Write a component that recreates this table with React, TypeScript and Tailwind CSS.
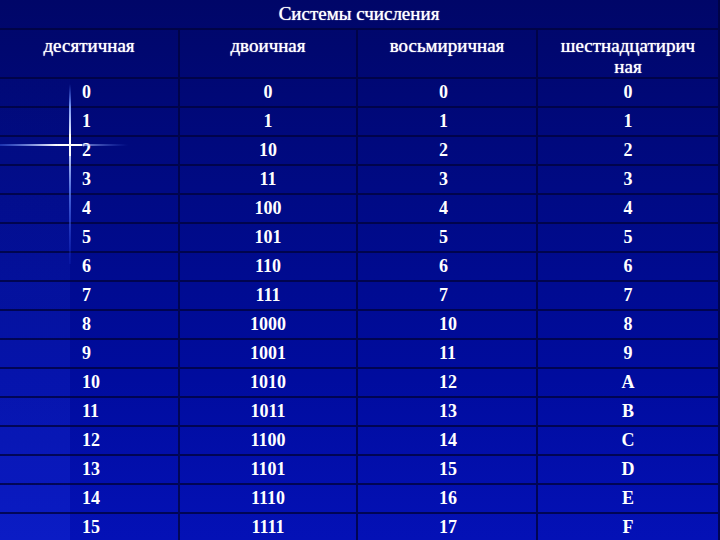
import { Fragment } from 'react';

const rows: [string, string, string, string][] = [
    ['0', '0', '0', '0'],
    ['1', '1', '1', '1'],
    ['2', '10', '2', '2'],
    ['3', '11', '3', '3'],
    ['4', '100', '4', '4'],
    ['5', '101', '5', '5'],
    ['6', '110', '6', '6'],
    ['7', '111', '7', '7'],
    ['8', '1000', '10', '8'],
    ['9', '1001', '11', '9'],
    ['10', '1010', '12', 'A'],
    ['11', '1011', '13', 'B'],
    ['12', '1100', '14', 'C'],
    ['13', '1101', '15', 'D'],
    ['14', '1110', '16', 'E'],
    ['15', '1111', '17', 'F'],
];

const cell = 'border-b-2 border-r-2 border-[#00033e]/80 flex items-center';
const head = `${cell} justify-center items-start pt-[5px] text-[19px] leading-[21px] text-center [text-shadow:0_0_1px_#ffffff]`;

// Blue glint on the left edge of the slide
const Sparkle = () => (
    <svg className="absolute left-0 top-0 pointer-events-none" width="160" height="540" viewBox="0 0 160 540">
        <defs>
            <linearGradient id="hz" x1="0" x2="1" y1="0" y2="0">
                <stop offset="0" stopColor="#4f7bff" stopOpacity="0.35" />
                <stop offset="0.44" stopColor="#ffffff" stopOpacity="1" />
                <stop offset="1" stopColor="#4f7bff" stopOpacity="0" />
            </linearGradient>
            <linearGradient id="vt" x1="0" x2="0" y1="0" y2="1">
                <stop offset="0" stopColor="#4f7bff" stopOpacity="0" />
                <stop offset="0.12" stopColor="#7fa0ff" stopOpacity="0.9" />
                <stop offset="0.3" stopColor="#ffffff" stopOpacity="1" />
                <stop offset="0.6" stopColor="#6a90ff" stopOpacity="0.7" />
                <stop offset="1" stopColor="#3050ff" stopOpacity="0.1" />
            </linearGradient>
        </defs>
        <rect x="0" y="144" width="128" height="2" fill="url(#hz)" />
        <rect x="69" y="84" width="2" height="180" fill="url(#vt)" />
        <rect x="58" y="144" width="24" height="2" fill="#ffffff" />
        <rect x="69" y="134" width="2" height="22" fill="#ffffff" />
    </svg>
);

export default function App() {
    return (
        <div
            className="relative w-[720px] h-[540px] overflow-hidden text-white bg-[linear-gradient(to_bottom,#000668_0%,#000a84_35%,#000c9e_70%,#0411b6_100%)]"
            style={{ fontFamily: '"Liberation Serif", "Times New Roman", serif' }}
        >
            <div className="grid grid-cols-[180px_178px_180px_182px] grid-rows-[30px_49px_repeat(16,1fr)] h-[540px]">
                <div className={`${cell} col-span-4 justify-center text-[19px] pt-[1px] [text-shadow:0_0_1px_#ffffff]`}>Системы счисления</div>

                <div className={head}>десятичная</div>
                <div className={head}>двоичная</div>
                <div className={head}>восьмиричная</div>
                <div className={head}>
                    шестнадцатирич
                    <br />
                    ная
                </div>

                {rows.map((r, i) => (
                    <Fragment key={i}>
                        <div
                            className={`${cell} pl-[82px] text-[18px] font-bold`}
                            style={{ background: `linear-gradient(to right, rgba(40,70,255,${(0.02 + i * 0.012).toFixed(3)}) 70px, transparent 70px)` }}
                        >
                            {r[0]}
                        </div>
                        <div className={`${cell} justify-center text-[18px] font-bold`}>{r[1]}</div>
                        <div className={`${cell} pl-[81px] text-[18px] font-bold`}>{r[2]}</div>
                        <div className={`${cell} justify-center text-[18px] font-bold`}>{r[3]}</div>
                    </Fragment>
                ))}
            </div>
            <Sparkle />
        </div>
    );
}
